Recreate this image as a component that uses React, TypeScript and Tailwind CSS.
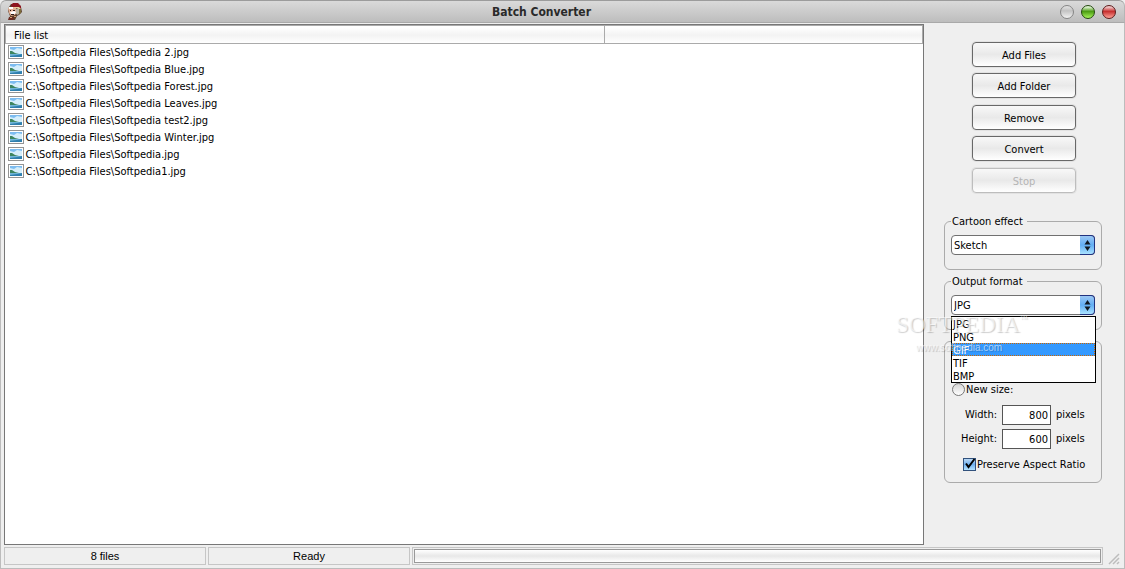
import React, { useState } from 'react';

const files = [
  'Softpedia 2.jpg',
  'Softpedia Blue.jpg',
  'Softpedia Forest.jpg',
  'Softpedia Leaves.jpg',
  'Softpedia test2.jpg',
  'Softpedia Winter.jpg',
  'Softpedia.jpg',
  'Softpedia1.jpg'
];

const effects = ['Sketch'];
const formats = ['JPG', 'PNG', 'GIF', 'TIF', 'BMP'];

const AppIcon = () => (
  <svg width="16" height="18" viewBox="0 0 16 18" aria-hidden="true">
    <path d="M4 1h7l3 3 1 5-3 3-2 1-2 4H2l1-4-2-5 1-4z" fill="#5b3f2c" />
    <path d="M4 2 6 0h5l3 3v3l-4-2H5z" fill="#8e1620" />
    <path d="M6 4h6l2 2v1l-5-2H5z" fill="#e6d3a0" />
    <path d="M1 5h3l1-1 4 1 1 4-2 3-4 1-2-3z" fill="#e3b094" />
    <path d="M2 4h4v2H2zM3 9l4-1 2 1-1 2H4z" fill="#fff" />
    <path d="M9 6h3l1 3-2 3-2-1z" fill="#b9b2a0" />
    <path d="M12 6h2v4l-2 1z" fill="#7d6b38" />
    <path d="M3 7h1v1H3zM6 7h2v1H6zM4 11h3v1H4z" fill="#2c1a14" />
    <path d="M2 14h5l-1 3H1z" fill="#6b2a20" />
    <path d="M3 14h2v1H3zM7 13h2v1H7z" fill="#d8a070" />
  </svg>
);

const PictureIcon = () => (
  <svg width="16" height="14" viewBox="0 0 16 14" className="shrink-0" aria-hidden="true">
    <rect x="0.5" y="0.5" width="15" height="13" fill="#fff" stroke="#949494" />
    <rect x="2" y="2" width="12" height="10" fill="#d5eefb" />
    <path d="M2 2h12v2L9 3 6 5 2 4z" fill="#7cbcf0" />
    <path d="M2 6h2l3 2 4 1h3v1H2z" fill="#3d8560" />
    <path d="M2 9h12v3H2z" fill="#6fb4d8" />
    <path d="M2 11 9 10l5-1v3H2z" fill="#2f7fae" />
  </svg>
);

const buttonClass =
  'h-[25px] w-full rounded border border-[#686868] bg-linear-to-b from-[#f8f8f8] via-[#e9e9e9] to-white pt-0.5 text-center shadow-[0_0_0_1px_#e2e2e2] disabled:border-[#bdbdbd] disabled:text-[#b4b4b4]';

const SelectArrows = () => (
  <span className="pointer-events-none absolute inset-y-0 right-0 flex w-[15px] items-center justify-center rounded-r border border-l-0 border-[#22337f] bg-linear-to-b from-[#9cc8f4] via-[#62aef4] to-[#a9e2ff]">
    <svg width="7" height="13" viewBox="0 0 7 13" aria-hidden="true">
      <path d="M3.5 1 6.5 5.5h-6zM3.5 12 6.5 7.5h-6z" fill="#101820" />
    </svg>
  </span>
);

interface ComboProps {
  id: string;
  value: string;
  options: string[];
  onChange: (value: string) => void;
}

const Combo: React.FC<ComboProps> = ({ id, value, options, onChange }) => (
  <div className="relative h-5">
    <select
      id={id}
      value={value}
      onChange={(e) => onChange(e.target.value)}
      className="h-5 w-full appearance-none rounded border border-[#707070] bg-white pt-0.5 pl-0.5"
    >
      {options.map((option) => (
        <option key={option}>{option}</option>
      ))}
    </select>
    <SelectArrows />
  </div>
);

const TitleBar = () => (
  <header className="relative flex h-[23px] shrink-0 items-center justify-between rounded-t-md border border-b-[#a9a9a9] border-x-[#b5b5b5] border-t-[#9c9c9c] bg-linear-to-b from-[#dadada] to-[#bdbdbd] pr-2 pl-1.5">
    <AppIcon />
    <h1 className="pt-px text-[12px] font-bold text-[#2a2a2a]">Batch Converter</h1>
    <div className="flex gap-[7px]">
      <button
        aria-label="Minimize"
        className="size-3.5 rounded-full border border-[#858585] bg-[linear-gradient(#e4e4e4,#c2c2c2_40%,#f2f2f2)]"
      />
      <button
        aria-label="Maximize"
        className="size-3.5 rounded-full border border-[#24480f] bg-[linear-gradient(#d9efcc_10%,#4c9c14_45%,#a6f55a)]"
      />
      <button
        aria-label="Close"
        className="size-3.5 rounded-full border border-[#5c1a1a] bg-[linear-gradient(#f0c4c4_10%,#c62f2f_45%,#ffa399)]"
      />
    </div>
  </header>
);

const FileList = () => (
  <main className="min-w-0 flex-1 border border-[#777] bg-white">
    <table className="w-full table-fixed border-collapse">
      <thead>
        <tr className="h-[18px] border border-[#aaa] bg-linear-to-b from-white via-[#f3f3f3] to-white">
          <th className="w-[599px] border-r border-[#aaa] pt-0.5 pl-2 text-left font-normal">File list</th>
          <th />
        </tr>
      </thead>
      <tbody>
        {files.map((file) => (
          <tr key={file} className="h-[17px]">
            <td colSpan={2} className="pl-0.5">
              <span className="flex items-center gap-0.5">
                <PictureIcon />
                <span className="pt-0.5">{`C:\\Softpedia Files\\${file}`}</span>
              </span>
            </td>
          </tr>
        ))}
      </tbody>
    </table>
  </main>
);

const groupClass = 'rounded-md border border-[#ababab] px-1.5';
const legendClass = 'pt-0.5 pr-1 pl-px leading-3';
const sizeInputClass = 'h-5 w-[49px] border border-[#555] bg-white pr-0.5 text-right';

const App: React.FC = () => {
  const [effect, setEffect] = useState('Sketch');
  const [format, setFormat] = useState('JPG');
  const [highlighted, setHighlighted] = useState('GIF');
  const [listOpen, setListOpen] = useState(true);
  const [width, setWidth] = useState('800');
  const [height, setHeight] = useState('600');

  return (
    <div className="flex min-h-screen flex-col bg-[#efefef] font-['DejaVu_Sans_Condensed','DejaVu_Sans',sans-serif] text-[11px] leading-[14px] text-black">
      <TitleBar />
      <div className="flex flex-1 flex-col border-x border-b border-[#bcbcbc] pt-px pl-[3px]">
        <div className="flex flex-1">
          <FileList />

          <aside className="w-[200px] shrink-0 pt-[18px] pr-[22px] pl-5">
            <div className="mr-[26px] ml-7 flex flex-col gap-[7px]">
              <div className="flex flex-col gap-1.5">
                <button className={buttonClass}>Add Files</button>
                <button className={buttonClass}>Add Folder</button>
              </div>
              <div className="flex flex-col gap-1.5">
                <button className={buttonClass}>Remove</button>
                <button className={buttonClass}>Convert</button>
              </div>
              <button className={buttonClass} disabled>
                Stop
              </button>
            </div>

            <fieldset className={`${groupClass} mt-[21px] pt-[7px] pb-3.5`}>
              <legend className={legendClass}>
                <label htmlFor="effect">Cartoon effect</label>
              </legend>
              <Combo id="effect" value={effect} options={effects} onChange={setEffect} />
            </fieldset>

            <div className="relative mt-1">
              <fieldset className={`${groupClass} pt-[7px] pb-3.5`}>
                <legend className={legendClass}>
                  <label htmlFor="format">Output format</label>
                </legend>
                <Combo id="format" value={format} options={formats} onChange={setFormat} />
              </fieldset>

              {listOpen && (
                <ul
                  role="listbox"
                  aria-label="Output format"
                  className="absolute top-[42px] right-1.5 left-[7px] z-10 border border-black bg-white leading-3"
                >
                  {formats.map((item) => (
                    <li
                      key={item}
                      role="option"
                      aria-selected={item === highlighted}
                      onMouseEnter={() => setHighlighted(item)}
                      onClick={() => {
                        setFormat(item);
                        setListOpen(false);
                      }}
                      className={`h-[13px] pt-0.5 pl-px ${
                        item === highlighted ? 'bg-[#3399ff] text-white outline-1 -outline-offset-1 outline-dotted outline-[#cc6600]' : ''
                      }`}
                    >
                      {item}
                    </li>
                  ))}
                </ul>
              )}

              {/* Watermark */}
              <div
                aria-hidden="true"
                className="pointer-events-none absolute top-[41px] -left-12 z-20 font-['Liberation_Serif',serif] whitespace-nowrap text-white/60 [text-shadow:1px_1px_1px_rgba(0,0,0,0.2)]"
              >
                <div className="flex text-[23px] leading-5">
                  SOFTPEDIA<span className="text-[8px] leading-2">™</span>
                </div>
                <div className="pt-1.5 pl-5 font-['Liberation_Sans_Narrow','Liberation_Sans',sans-serif] text-[10px]">
                  www.softpedia.com
                </div>
              </div>
            </div>

            {/* Output size */}
            <div className={`${groupClass} mt-[11px] pt-10 pb-[11px]`}>
              <label className="flex h-3.5 items-center gap-px pl-px">
                <input
                  type="radio"
                  name="size"
                  className="size-[13px] appearance-none rounded-full border border-[#777] bg-linear-to-b from-[#d6d6d6] to-white"
                />
                <span className="pt-0.5">New size:</span>
              </label>
              <div className="mt-[9px] grid grid-cols-[46px_49px_1fr] items-center gap-x-[5px] gap-y-1">
                <label htmlFor="width" className="text-right">Width:</label>
                <input id="width" value={width} onChange={(e) => setWidth(e.target.value)} className={sizeInputClass} />
                <span>pixels</span>
                <label htmlFor="height" className="text-right">Height:</label>
                <input id="height" value={height} onChange={(e) => setHeight(e.target.value)} className={sizeInputClass} />
                <span>pixels</span>
              </div>
              <label className="mt-2 ml-3 flex h-3.5 items-center gap-px whitespace-nowrap">
                <span className="relative size-[13px] shrink-0">
                  <input
                    type="checkbox"
                    defaultChecked
                    className="peer block size-[13px] appearance-none border border-[#31517c] bg-linear-to-b from-[#b9d8f5] via-[#6fb0ee] to-[#b4e4ff]"
                  />
                  <svg
                    width="13"
                    height="13"
                    viewBox="0 0 13 13"
                    className="pointer-events-none invisible absolute top-0 left-0 peer-checked:visible"
                    aria-hidden="true"
                  >
                    <path d="M3 5.5 5.5 9 11.5 1" fill="none" stroke="#000" strokeWidth="2" />
                  </svg>
                </span>
                <span className="pt-0.5">Preserve Aspect Ratio</span>
              </label>
            </div>
          </aside>
        </div>

        <footer className="mt-0.5 mb-[3px] flex h-[18px] gap-0.5 pr-1 text-center font-['Liberation_Sans',sans-serif] leading-4">
          <div className="w-[202px] border border-[#c6c6c6]">8 files</div>
          <div className="w-[202px] border border-[#c6c6c6]">Ready</div>
          <div className="flex-1 border border-[#c6c6c6] p-px">
            <div
              role="progressbar"
              aria-valuenow={0}
              className="h-3.5 border border-[#999] bg-linear-to-b from-white via-[#e8e8e8] to-white"
            />
          </div>
          <svg width="15" height="18" viewBox="0 0 15 18" aria-hidden="true">
            <path d="M4 17 14 7M8 17l6-6M12 17l2-2" stroke="#bdbdbd" strokeWidth="1.5" />
          </svg>
        </footer>
      </div>
    </div>
  );
};

export default App;
